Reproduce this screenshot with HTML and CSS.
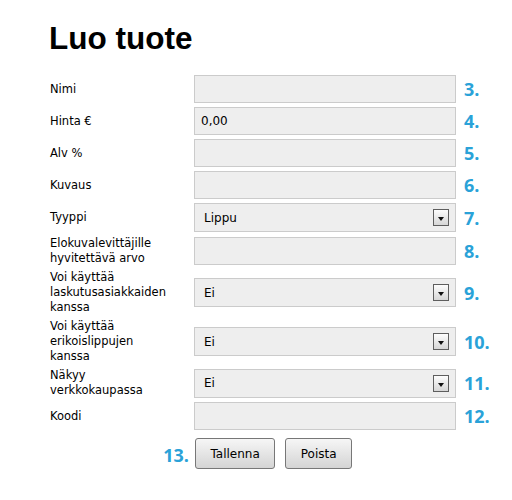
FILE: index.html
```html
<!DOCTYPE html>
<html lang="fi">
<head>
    <meta charset="UTF-8">
    <title>Luo tuote</title>
    <link rel="stylesheet" href="styles.css">
</head>
<body>
    <div class="page">
        <h1>Luo tuote</h1>
        <form>
            <table class="form-table">
                <tr>
                    <td class="label">Nimi</td>
                    <td class="field"><input type="text"></td>
                    <td class="step">3.</td>
                </tr>
                <tr>
                    <td class="label">Hinta €</td>
                    <td class="field"><input type="text" value="0,00"></td>
                    <td class="step">4.</td>
                </tr>
                <tr>
                    <td class="label">Alv %</td>
                    <td class="field"><input type="text"></td>
                    <td class="step">5.</td>
                </tr>
                <tr>
                    <td class="label">Kuvaus</td>
                    <td class="field"><input type="text"></td>
                    <td class="step">6.</td>
                </tr>
                <tr>
                    <td class="label">Tyyppi</td>
                    <td class="field">
                        <div class="select-wrap">
                            <select><option>Lippu</option></select>
                            <span class="arrow"></span>
                        </div>
                    </td>
                    <td class="step">7.</td>
                </tr>
                <tr>
                    <td class="label">Elokuvalevittäjille hyvitettävä arvo</td>
                    <td class="field"><input type="text"></td>
                    <td class="step">8.</td>
                </tr>
                <tr>
                    <td class="label">Voi käyttää laskutusasiakkaiden kanssa</td>
                    <td class="field">
                        <div class="select-wrap">
                            <select><option>Ei</option></select>
                            <span class="arrow"></span>
                        </div>
                    </td>
                    <td class="step">9.</td>
                </tr>
                <tr>
                    <td class="label">Voi käyttää erikoislippujen kanssa</td>
                    <td class="field">
                        <div class="select-wrap">
                            <select><option>Ei</option></select>
                            <span class="arrow"></span>
                        </div>
                    </td>
                    <td class="step">10.</td>
                </tr>
                <tr>
                    <td class="label">Näkyy verkkokaupassa</td>
                    <td class="field">
                        <div class="select-wrap">
                            <select><option>Ei</option></select>
                            <span class="arrow"></span>
                        </div>
                    </td>
                    <td class="step">11.</td>
                </tr>
                <tr>
                    <td class="label">Koodi</td>
                    <td class="field"><input type="text"></td>
                    <td class="step">12.</td>
                </tr>
                <tr class="actions">
                    <td class="step step-left">13.</td>
                    <td class="field" colspan="2">
                        <div class="buttons">
                            <button type="button">Tallenna</button>
                            <button type="button">Poista</button>
                        </div>
                    </td>
                </tr>
            </table>
        </form>
    </div>
</body>
</html>
```

FILE: styles.css
```css
body {
    margin: 0;
    background: #fff;
    color: #000;
    font-family: "DejaVu Sans", Verdana, sans-serif;
}

.page {
    padding: 0 0 0 50px;
}

h1 {
    font-family: "Liberation Sans", Arial, sans-serif;
    font-size: 31.5px;
    font-weight: bold;
    margin: 0 0 0 -1px;
    padding: 20px 0 17px 0;
    line-height: 36px;
}

.form-table {
    border-collapse: collapse;
    border-spacing: 0;
}

.form-table td {
    padding: 2px 0;
    vertical-align: middle;
}

.form-table .label {
    width: 120px;
    padding-right: 24px;
    font-size: 11.5px;
    line-height: 15px;
}

.field {
    width: 262px;
}

input[type="text"],
select {
    display: block;
    box-sizing: border-box;
    width: 262px;
    height: 28px;
    margin: 0;
    padding: 0 6px;
    border: 1px solid #cbcbcb;
    background: #eeeeee;
    font-family: "DejaVu Sans", Verdana, sans-serif;
    font-size: 12px;
    color: #000;
    outline: none;
}

.select-wrap {
    position: relative;
}

select {
    height: 29px;
    padding: 0 9px;
    -webkit-appearance: none;
    appearance: none;
    border-radius: 0;
}

.arrow {
    position: absolute;
    right: 7px;
    top: 6px;
    width: 14px;
    height: 15px;
    border: 1px solid #5e5e5e;
    background: linear-gradient(#fdfdfd, #d6d6d6);
    pointer-events: none;
}

.arrow::after {
    content: "";
    position: absolute;
    left: 4px;
    top: 7px;
    border-left: 3.5px solid transparent;
    border-right: 3.5px solid transparent;
    border-top: 4px solid #111;
}

.form-table .step {
    padding-left: 8px;
    font-family: "Open Sans", sans-serif;
    font-weight: bold;
    font-size: 18px;
    color: #2aa2d8;
    line-height: 20px;
}

.form-table .step-left {
    text-align: right;
    padding: 6px 5px 0 0;
}

.actions td {
    padding-top: 6px;
}

.buttons {
    display: flex;
    gap: 10px;
    padding-left: 1px;
}

button {
    height: 31px;
    padding: 0 14.5px;
    margin: 0;
    border: 1px solid #777;
    border-radius: 3px;
    background: linear-gradient(#f6f6f6, #d4d4d4);
    font-family: "DejaVu Sans", Verdana, sans-serif;
    font-size: 12px;
    color: #000;
    cursor: pointer;
}
```
